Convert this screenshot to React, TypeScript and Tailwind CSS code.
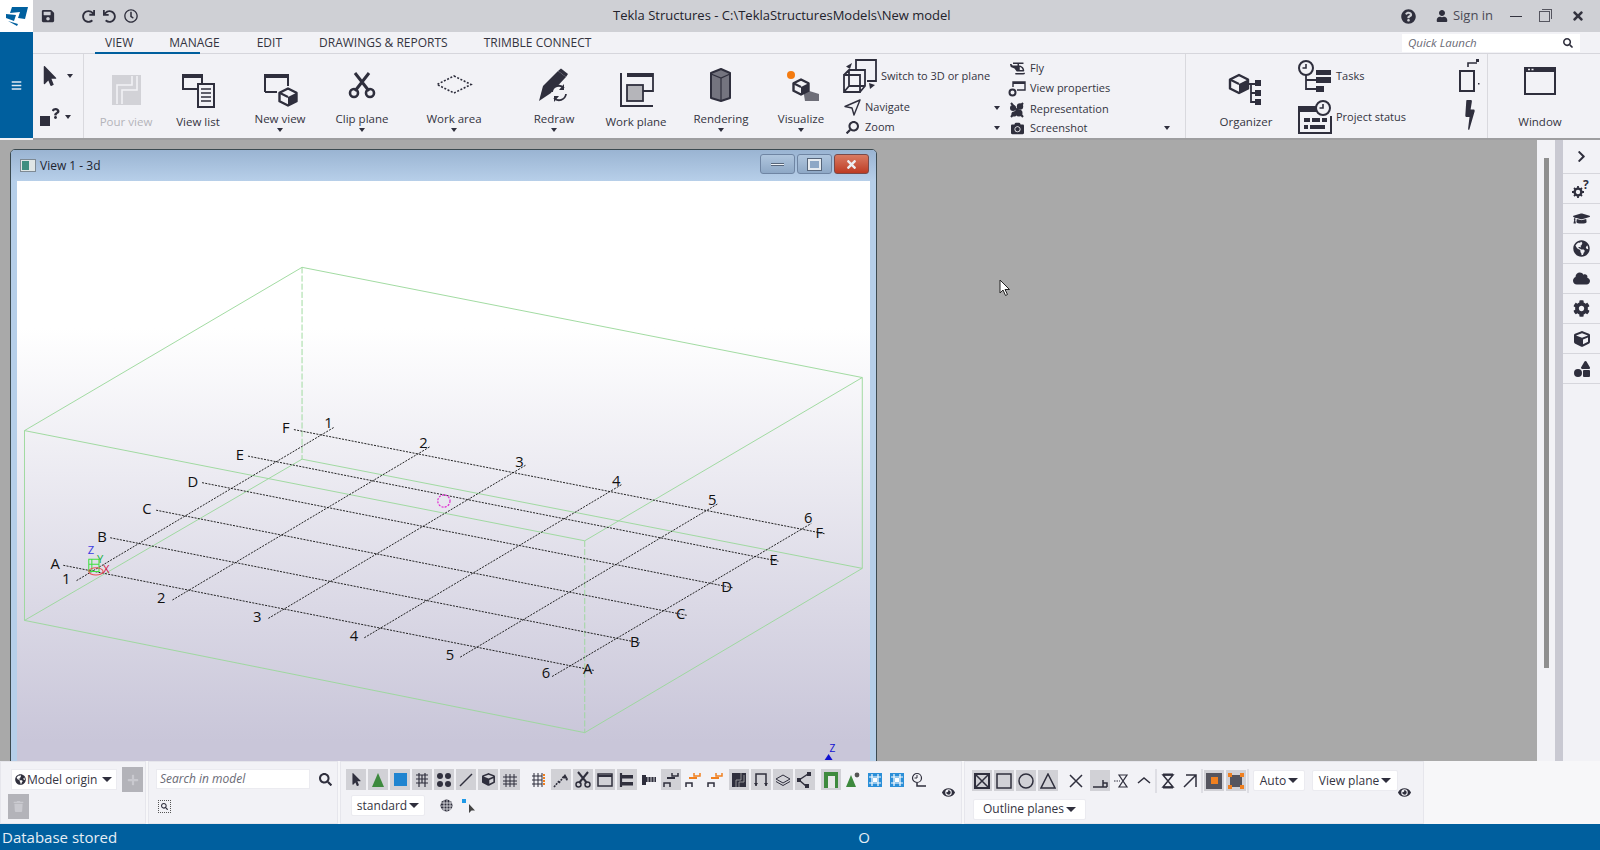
// Tekla Structures main window with a 3D view
import type { ReactNode } from "react"
import {
	FaChevronRight, FaCloud, FaCog, FaCube, FaEye, FaGlobeAmericas, FaGraduationCap, FaHelicopter,
	FaCamera, FaMousePointer, FaPlus, FaQuestion, FaQuestionCircle, FaRedo, FaRegClock, FaSave,
	FaSearch, FaShapes, FaTrash, FaUndo, FaUser, FaBolt, FaBars, FaTimes,
} from "react-icons/fa"

const D = "#2f2f3d"
const FONT = "font-['Open_Sans',sans-serif]"

function Caret({ className = "" }: { className?: string }) {
	return <span className={`inline-block w-0 h-0 border-x-[3.5px] border-x-transparent border-t-[4px] border-t-[#2f2f3d] ${className}`} />
}

/* 40x40 ribbon icons */
function Big({ children }: { children: ReactNode }) {
	return <svg width="40" height="40" viewBox="0 0 40 40" className="shrink-0 overflow-visible">{children}</svg>
}

const Cube = ({ x, y, r, fill = "#f2f2f6" }: { x: number; y: number; r: number; fill?: string }) => (
	<g strokeLinejoin="round">
		<path d={`M${x} ${y - r}L${x + r} ${y - r / 2}V${y + r / 2}L${x} ${y + r}L${x - r} ${y + r / 2}V${y - r / 2}Z`} fill={fill} stroke={D} strokeWidth="2.4" />
		<path d={`M${x} ${y}L${x + r} ${y - r / 2}V${y + r / 2}L${x} ${y + r}Z`} fill={D} />
		<path d={`M${x - r} ${y - r / 2}L${x} ${y}`} stroke={D} strokeWidth="2" />
	</g>
)

const PourIcon = () => (
	<Big>
		<rect x="6" y="7" width="29" height="30" fill="#d2d2d7" />
		<path d="M31 8V22H16V36M26 8V17H11V36" fill="none" stroke="#f2f2f6" strokeWidth="1.6" />
	</Big>
)
const ViewListIcon = () => (
	<Big>
		<rect x="5" y="7" width="19" height="14" fill="none" stroke={D} strokeWidth="2" />
		<rect x="5" y="6" width="19" height="4" fill={D} />
		<rect x="20" y="16" width="16" height="23" fill="#f2f2f6" stroke={D} strokeWidth="2" />
		<path d="M23 21H33M23 25H33M23 29H33M23 33H33" stroke={D} strokeWidth="1.6" />
	</Big>
)
const NewViewIcon = () => (
	<Big>
		<path d="M5 24V7H28V18" fill="none" stroke={D} strokeWidth="2" />
		<path d="M5 24H17" stroke={D} strokeWidth="2" />
		<rect x="4" y="6" width="25" height="4" fill={D} />
		<Cube x={28} y={29} r={8.5} />
	</Big>
)
const ScissorsIcon = () => (
	<Big>
		<path d="M27 5L13 23M13 5L27 23" stroke={D} strokeWidth="3" />
		<circle cx="12" cy="25" r="4" fill="none" stroke={D} strokeWidth="2.6" />
		<circle cx="28" cy="25" r="4" fill="none" stroke={D} strokeWidth="2.6" />
	</Big>
)
const WorkAreaIcon = () => (
	<Big>
		<path d="M20 8L37 16.5L20 25L3 16.5Z" fill="none" stroke={D} strokeWidth="1.6" strokeDasharray="2 1.6" />
	</Big>
)
const RedrawIcon = () => (
	<Big>
		<path d="M5 33L9 18L24 3L32 9L17 25Z" fill={D} />
		<path d="M24 3L27 0.5L34 6L32 9Z" fill={D} />
		<circle cx="25" cy="25" r="7.5" fill="#f2f2f6" />
		<path d="M18 24A7 7 0 0 1 30 20M32 26A7 7 0 0 1 20 30" fill="none" stroke={D} strokeWidth="1.8" />
		<path d="M30 16V22H25ZM20 34V28H25Z" fill={D} />
	</Big>
)
const WorkPlaneIcon = () => (
	<Big>
		<path d="M5 5V38H37" fill="none" stroke={D} strokeWidth="2" />
		<path d="M11 6H37V23H26" fill="none" stroke={D} strokeWidth="1.8" />
		<rect x="11" y="5" width="26" height="4" fill={D} />
		<rect x="11" y="17" width="16" height="16" fill="#b5b5ba" stroke={D} strokeWidth="1.8" />
	</Big>
)
const RenderingIcon = () => (
	<Big>
		<path d="M20 1L29 5V30L20 33L10 30V5Z" fill="#74747f" stroke={D} strokeWidth="2" strokeLinejoin="round" />
		<path d="M10 6L20 10L29 6M20 10V33" fill="none" stroke={D} strokeWidth="1.2" />
	</Big>
)
const VisualizeIcon = () => (
	<Big>
		<path d="M22 21L38 26V33H24Z" fill="#6e6e78" />
		<circle cx="10" cy="7" r="4" fill="#f47b10" />
		<Cube x={20} y={19} r={7.5} fill="#f2f2f6" />
	</Big>
)
const OrganizerIcon = () => (
	<Big>
		<Cube x={13} y={16} r={9} />
		<path d="M23 16H32M25 16V34H32M25 25H32" fill="none" stroke={D} strokeWidth="1.8" />
		<rect x="29" y="12" width="6" height="6" fill={D} />
		<rect x="29" y="22" width="6" height="6" fill={D} />
		<rect x="29" y="31" width="6" height="6" fill={D} />
	</Big>
)
const WindowIcon = () => (
	<Big>
		<rect x="5" y="0" width="30" height="26" fill="none" stroke={D} strokeWidth="2" />
		<rect x="4" y="-1" width="32" height="5" fill={D} />
		<path d="M8 1.5H15" stroke="#f2f2f6" strokeWidth="1.4" strokeDasharray="2 1.5" />
	</Big>
)

/* 34x34 medium icons */
function Mid({ children }: { children: ReactNode }) {
	return <svg width="34" height="34" viewBox="0 0 34 34" className="shrink-0">{children}</svg>
}
const SwitchIcon = () => (
	<Mid>
		<path d="M13 11V1H33V22H24" fill="none" stroke={D} strokeWidth="1.8" />
		<path d="M1 16H17V33H1ZM1 16L6 11H22V27L17 33M6 11V27H22M6 27L1 33" fill="none" stroke={D} strokeWidth="1.8" />
		<path d="M9 4L3 7.5L7 10Z" fill={D} />
		<path d="M27 30L32 26L26 24Z" fill={D} />
	</Mid>
)
const TasksIcon = () => (
	<Mid>
		<circle cx="8" cy="9" r="7" fill="#f2f2f6" stroke={D} strokeWidth="2" />
		<path d="M8 5V9H4.5" fill="none" stroke={D} strokeWidth="1.6" />
		<path d="M8 16V30H20M8 21H20" fill="none" stroke={D} strokeWidth="1.8" />
		<rect x="18" y="11" width="15" height="5" fill={D} />
		<rect x="18" y="18" width="15" height="6" fill={D} />
		<rect x="18" y="27" width="8" height="6" fill={D} />
	</Mid>
)
const StatusIcon = () => (
	<Mid>
		<path d="M22 7H1V33H33V16" fill="none" stroke={D} strokeWidth="2" />
		<rect x="1" y="7" width="20" height="5" fill={D} />
		<path d="M6 18H12V22H6ZM14 18H22V22H14ZM24 18H29V22H24ZM6 25H10V29H6ZM12 25H27V29H12Z" fill={D} />
		<circle cx="25" cy="8" r="7" fill="#f2f2f6" stroke={D} strokeWidth="2" />
		<path d="M25 4V8H21.5" fill="none" stroke={D} strokeWidth="1.6" />
	</Mid>
)
const SmallSetIcon = () => (
	<svg width="21" height="34" viewBox="0 0 21 34" className="shrink-0">
		<rect x="1" y="12" width="14" height="20" fill="none" stroke={D} strokeWidth="2" />
		<path d="M9 8V4H18" fill="none" stroke={D} strokeWidth="1.6" />
		<rect x="17" y="0" width="3" height="3" fill={D} />
		<rect x="19" y="24" width="1.5" height="1.5" fill={D} />
	</svg>
)

function BigBtn({ label, w, icon, drop, dim }: { label: string; w: string; icon: ReactNode; drop?: boolean; dim?: boolean }) {
	return (
		<div className={`${w} shrink-0 flex flex-col items-center pt-[14px]`}>
			{icon}
			<span className={`${drop ? "mt-[1px]" : "mt-[4px]"} h-[20px] leading-[20px] text-[11.5px] whitespace-nowrap ${dim ? "text-[#b4b4ba]" : "text-[#34343f]"}`}>{label}</span>
			{drop && <Caret className="mt-[-1px]" />}
		</div>
	)
}

function SmallRow({ icon, label, h, caret }: { icon: ReactNode; label: string; h: string; caret?: boolean }) {
	return (
		<div className={`${h} flex items-center gap-[4px] text-[11px] text-[#34343f] whitespace-nowrap`}>
			<span className="w-[18px] flex justify-center shrink-0">{icon}</span>
			{label}
			{caret && <Caret className="ml-auto mr-[3px]" />}
		</div>
	)
}

function Ribbon() {
	return (
		<div className={`h-[86px] flex bg-[#f2f2f6] border-b-2 border-[#9e9ea0] ${FONT}`}>
			<div className="w-[51px] shrink-0 border-r border-[#d9d9de] flex flex-col pl-[7px] pt-[11px] gap-[19px]">
				<div className="flex items-center h-[22px] gap-[7px]">
					<FaMousePointer size={20} color={D} />
					<Caret />
				</div>
				<div className="flex items-center h-[22px] relative">
					<span className="w-[10px] h-[10px] bg-[#2f2f3d] mt-[8px]" />
					<FaQuestion size={11} color={D} className="mt-[-8px]" />
					<Caret className="ml-[4px]" />
				</div>
			</div>
			<div className="w-[8px] shrink-0" />
			<BigBtn label="Pour view" w="w-[68px]" icon={<PourIcon />} dim />
			<BigBtn label="View list" w="w-[76px]" icon={<ViewListIcon />} />
			<BigBtn label="New view" w="w-[88px]" icon={<NewViewIcon />} drop />
			<BigBtn label="Clip plane" w="w-[76px]" icon={<ScissorsIcon />} drop />
			<BigBtn label="Work area" w="w-[108px]" icon={<WorkAreaIcon />} drop />
			<BigBtn label="Redraw" w="w-[92px]" icon={<RedrawIcon />} drop />
			<BigBtn label="Work plane" w="w-[72px]" icon={<WorkPlaneIcon />} />
			<BigBtn label="Rendering" w="w-[98px]" icon={<RenderingIcon />} drop />
			<BigBtn label="Visualize" w="w-[62px]" icon={<VisualizeIcon />} drop />

			<div className="w-[160px] ml-[11px] shrink-0 flex flex-col pt-[5px]">
				<div className="h-[34px] flex items-center gap-[4px] text-[11px] text-[#34343f] whitespace-nowrap">
					<SwitchIcon />
					Switch to 3D or plane
				</div>
				<div className="h-[5px]" />
				<SmallRow h="h-[20px]" label="Navigate" caret icon={
					<svg width="17" height="17" viewBox="0 0 17 17"><path d="M16 1L1 7.5L8 9L10 16Z" fill="none" stroke={D} strokeWidth="1.4" strokeLinejoin="round" /></svg>
				} />
				<SmallRow h="h-[21px]" label="Zoom" caret icon={<FaSearch size={13} color={D} className="-scale-x-100" />} />
			</div>
			<div className="w-[165px] ml-[5px] shrink-0 flex flex-col pt-[4px]">
				<SmallRow h="h-[20px]" label="Fly" icon={<FaHelicopter size={15} color={D} />} />
				<SmallRow h="h-[21px]" label="View properties" icon={
					<svg width="18" height="16" viewBox="0 0 18 16"><path d="M5 6V1H17V9H9" fill="none" stroke={D} strokeWidth="1.4" /><rect x="5" y="1" width="12" height="2" fill={D} /><circle cx="4.5" cy="11.5" r="3" fill="none" stroke={D} strokeWidth="2" /></svg>
				} />
				<SmallRow h="h-[21px]" label="Representation" icon={
					<svg width="16" height="16" viewBox="0 0 16 16"><path d="M2 1L14 15M14 1L2 15" stroke={D} strokeWidth="2" /><circle cx="4" cy="6" r="3" fill={D} /><circle cx="11" cy="4.5" r="3.2" fill={D} /><circle cx="10" cy="11" r="3.5" fill={D} /><circle cx="5" cy="12" r="2.6" fill={D} /></svg>
				} />
				<SmallRow h="h-[16px]" label="Screenshot" caret icon={<FaCamera size={13} color={D} />} />
			</div>
			<div className="w-[13px] shrink-0 border-r border-[#d9d9de]" />
			<div className="w-[20px] shrink-0" />
			<BigBtn label="Organizer" w="w-[80px]" icon={<OrganizerIcon />} />
			<div className="w-[150px] ml-[12px] shrink-0 flex flex-col pt-[5px] gap-[7px] text-[11px] text-[#34343f]">
				<div className="flex items-center gap-[4px]"><TasksIcon />Tasks</div>
				<div className="flex items-center gap-[4px]"><StatusIcon />Project status</div>
			</div>
			<div className="w-[21px] ml-[11px] shrink-0 flex flex-col pt-[5px] gap-[7px] items-end">
				<SmallSetIcon />
				<FaBolt size={30} color={D} className="scale-x-50 translate-x-[5px]" />
			</div>
			<div className="w-[8px] shrink-0 border-r border-[#d9d9de]" />
			<BigBtn label="Window" w="w-[104px]" icon={<WindowIcon />} />
		</div>
	)
}

function ViewWindow() {
	const rowsA: [string, number, number][] = [["A", 54, 552], ["B", 100, 525], ["C", 144, 498], ["D", 189, 471], ["E", 235, 445], ["F", 280, 418]]
	const rowsB: [string, number, number][] = [["A", 576, 655], ["B", 622, 628], ["C", 667, 601], ["D", 712, 574], ["E", 758, 548], ["F", 803, 521]]
	const colsA: [string, number, number][] = [["1", 65, 566], ["2", 158, 585], ["3", 252, 604], ["4", 347, 622], ["5", 441, 641], ["6", 535, 659]]
	const colsB: [string, number, number][] = [["1", 322, 414], ["2", 415, 433], ["3", 509, 452], ["4", 604, 470], ["5", 698, 489], ["6", 792, 507]]
	return (
		<div className="ml-[10px] mt-[9px] w-[867px] h-[700px] rounded-t-[5px] border border-[#3c4a50] bg-[#b6cfe9] shrink-0 flex flex-col">
			<div className={`h-[31px] shrink-0 rounded-t-[4px] bg-linear-to-b from-[#9ab4d2] to-[#b7cfe9] flex items-center pl-[9px] pr-[7px] ${FONT}`}>
				<svg width="16" height="13" viewBox="0 0 16 13" className="shrink-0">
					<rect x="0.5" y="0.5" width="15" height="12" fill="#dfe6e6" stroke="#7e8a94" />
					<rect x="2" y="2" width="7" height="9" fill="#3f8f80" />
				</svg>
				<span className="ml-[4px] text-[12px] text-[#1d2430]">View 1 - 3d</span>
				<div className="ml-auto flex gap-[2px] mt-[-3px]">
					<div className="w-[35px] h-[20px] rounded-[3px] border border-[#6f85a3] bg-linear-to-b from-[#b0c6de] to-[#8ea8c6] flex items-center justify-center">
						<span className="w-[13px] h-[3px] bg-[#eef2f6] border-y border-[#56657a]" />
					</div>
					<div className="w-[35px] h-[20px] rounded-[3px] border border-[#6f85a3] bg-linear-to-b from-[#b0c6de] to-[#8ea8c6] flex items-center justify-center">
						<span className="w-[13px] h-[11px] border-2 border-[#e6ebf0] outline outline-[#56657a] bg-[#8ea8c6]" />
					</div>
					<div className="w-[35px] h-[20px] rounded-[3px] border border-[#7a4a4a] bg-linear-to-b from-[#d97a62] to-[#bd3a22] flex items-center justify-center">
						<FaTimes size={13} color="#eceff2" />
					</div>
				</div>
			</div>
			<div className="mx-[6px] flex-1 bg-linear-to-b from-white from-[22%] to-[#c9c6d9] to-[84%] overflow-hidden">
				<svg width="853" height="579" viewBox="16.66 177.4 835.9 567.4" className={`block ${FONT}`}>
					{/* work area box */}
					<g fill="none" stroke="#9ad89a" strokeWidth="0.9">
						<path d="M296 262L845 370L573 530L24 422ZM24 422V608L573 718L845 557V370M296 450L24 608M296 450L845 557" />
						<path d="M296 262V450M573 530V718" strokeDasharray="6 2" />
					</g>
					{/* grid */}
					<g stroke="#111" strokeWidth="0.9" strokeDasharray="2 1.2">
						<path d="M62 554L582 657M108 527L627 630M153 500L673 603M198 473L718 576M243 447L763 550M288 421L808 523" />
						<path d="M75 569L327 419M169 588L421 438M263 606L515 456M357 625L609 475M451 644L703 494M541 663L795 513" />
					</g>
					<g fontSize="14.5" fill="#111" textAnchor="middle" dominantBaseline="central">
						{[...rowsA, ...rowsB, ...colsA, ...colsB].map(([t, x, y], i) => (
							<text key={i} x={x} y={y}>{t}</text>
						))}
					</g>
					<circle cx="435" cy="491" r="6" fill="none" stroke="#e020d0" strokeWidth="1.1" strokeDasharray="2 1.2" />
					{/* origin symbol */}
					<g fontSize="11">
						<path d="M87 548H97V560H87ZM90 548V560M87 553H97" fill="none" stroke="#3ee03e" strokeWidth="1" />
						<ellipse cx="94" cy="560" rx="7" ry="3.5" fill="none" stroke="#e85050" strokeWidth="1" />
						<text x="86" y="543" fill="#3a3ae0">Z</text>
						<text x="95" y="552" fill="#20b040">Y</text>
						<text x="101" y="562" fill="#d01040">X</text>
					</g>
					<path d="M812 739L816 745H808Z" fill="#1010d0" />
					<text x="813" y="737" fontSize="10" fill="#1010d0">Z</text>
				</svg>
			</div>
		</div>
	)
}

function Cell({ bg, w = "w-[20px]", ml = "ml-[2px]", children }: { bg?: boolean; w?: string; ml?: string; children: ReactNode }) {
	return <div className={`${w} ${ml} h-[21px] shrink-0 flex items-center justify-center ${bg ? "bg-[#d1d1d6]" : ""}`}>{children}</div>
}

/* 16x16 toolbar glyphs */
function G({ children }: { children: ReactNode }) {
	return <svg width="16" height="16" viewBox="0 0 16 16">{children}</svg>
}
const l = { fill: "none", stroke: D, strokeWidth: 1.5 } as const
const gridG = <path d="M1 5H15M1 9H15M1 12H15M4 2V15M8 2V15M12 2V15" {...l} strokeWidth={1} />
const splitG = (c: string, c2: string) => (
	<G>
		<path d="M9 1V4H15V1" fill="none" stroke={c} strokeWidth="1.5" />
		<path d="M4 6H12" stroke={c} strokeWidth="2" />
		<path d="M1 15V11H7V15" fill="none" stroke={c2} strokeWidth="1.5" />
	</G>
)
const blueG = (
	<G>
		<rect x="1" y="1" width="14" height="14" fill="#2b8fd8" />
		<path d="M5 2V14M11 2V14M2 5H14M2 11H14" stroke="#fff" strokeWidth="1.2" />
		<rect x="6" y="6" width="4" height="4" fill="#fff" />
	</G>
)

function Select({ label, w, ml = "" }: { label: string; w: string; ml?: string }) {
	return (
		<div className={`${w} ${ml} h-[21px] shrink-0 bg-white border border-[#ebebf0] rounded-[2px] flex items-center justify-center gap-[2px] text-[12px] text-[#34343f] whitespace-nowrap`}>
			{label}
			<span className="inline-block w-0 h-0 border-x-[5px] border-x-transparent border-t-[5px] border-t-[#2f2f3d]" />
		</div>
	)
}

const Div = () => <div className="w-[2px] h-[24px] mx-[1px] bg-[#dedee4] shrink-0" />

function BottomBar() {
	const panel = "h-full bg-[#f2f2f6] border border-[#e6e6ec] shrink-0"
	return (
		<div className={`h-[63px] shrink-0 flex items-stretch gap-[2px] bg-[#f7f7f9] ${FONT}`}>
			{/* origin */}
			<div className={`${panel} w-[146px] pt-[5px]`}>
				<div className="flex items-center h-[25px] pl-[10px]">
					<div className="w-[106px] h-[21px] bg-white border border-[#ebebf0] flex items-center gap-[1px] pl-[3px] text-[12px] text-[#34343f] whitespace-nowrap">
						<FaGlobeAmericas size={11} color={D} />
						Model origin
						<span className="ml-[4px] inline-block w-0 h-0 border-x-[5px] border-x-transparent border-t-[5px] border-t-[#2f2f3d]" />
					</div>
					<div className="ml-[5px] w-[21px] h-[25px] bg-[#b3b3b9] flex items-center justify-center"><FaPlus size={12} color="#c9c9cf" /></div>
				</div>
				<div className="mt-[2px] ml-[7px] w-[21px] h-[25px] bg-[#b3b3b9] flex items-center justify-center"><FaTrash size={11} color="#c9c9cf" /></div>
			</div>
			{/* search */}
			<div className={`${panel} w-[190px] pt-[7px] pl-[7px]`}>
				<div className="flex items-center">
					<div className="w-[154px] h-[20px] bg-white border border-[#ebebf0] flex items-center pl-[3px] italic text-[12px] text-[#6a6a75]">Search in model</div>
					<FaSearch size={13} color={D} className="ml-[9px]" />
				</div>
				<div className="mt-[11px] ml-[2px] w-[13px] h-[13px] border border-dotted border-[#555] flex items-center justify-center">
					<FaSearch size={7} color={D} />
				</div>
			</div>
			{/* selection switches */}
			<div className={`${panel} w-[622px] flex items-center pr-[4px]`}>
				<div className="flex-1">
					<div className="flex pl-[3px]">
						<Cell bg><FaMousePointer size={13} color={D} /></Cell>
						<Cell bg><svg width="14" height="16" viewBox="0 0 14 16"><path d="M7 1L13 15H1Z" fill="#3e8a3e" /></svg></Cell>
						<Cell bg><span className="w-[13px] h-[13px] bg-[#1f84d0]" /></Cell>
						<Cell bg><G><path d="M2 3H14M2 7H14M2 11H14M5 1V15M11 1V15M8 3V11" {...l} strokeWidth={1.2} /></G></Cell>
						<Cell bg><G><circle cx="4" cy="4" r="3" fill={D} /><circle cx="12" cy="4" r="3" fill={D} /><circle cx="4" cy="12" r="3" fill={D} /><circle cx="12" cy="12" r="3" fill={D} /></G></Cell>
						<Cell bg><G><path d="M2 14L14 2" {...l} /></G></Cell>
						<Cell bg><FaCube size={13} color={D} /></Cell>
						<Cell bg><G>{gridG}</G></Cell>
						<Cell ml="ml-[9px]"><G><path d="M1 4H11M1 8H11M1 12H11M3 1V15M7 1V15M11 1V15" fill="none" stroke={D} strokeWidth="1" /><path d="M13 2V14" stroke="#f08020" strokeWidth="2" strokeDasharray="2 1" /></G></Cell>
						<Cell bg><G><path d="M1 15L6 9M6 11L11 4L15 9" fill="none" stroke={D} strokeWidth="1.6" strokeDasharray="2 1" /><path d="M9 6L12 2L15 7Z" fill={D} /></G></Cell>
						<Cell bg><svg width="16" height="17" viewBox="0 0 16 17"><path d="M13 1L4 12M3 1L12 12" {...l} strokeWidth={2} /><circle cx="3.5" cy="13.5" r="2.5" {...l} /><circle cx="12.5" cy="13.5" r="2.5" {...l} /></svg></Cell>
						<Cell bg><G><rect x="1" y="2" width="14" height="12" {...l} /><path d="M1 4H15" stroke={D} strokeWidth="2" /></G></Cell>
						<Cell bg><G><path d="M2 1V15" stroke={D} strokeWidth="2.2" /><rect x="2" y="3" width="12" height="3.5" fill={D} /><rect x="2" y="10" width="12" height="3.5" fill={D} /></G></Cell>
						<Cell><G><rect x="1" y="3" width="4" height="10" fill={D} /><rect x="5" y="5" width="10" height="5" fill={D} /><path d="M7 5V10M10 5V10M13 5V10" stroke="#f2f2f6" strokeWidth="0.8" /></G></Cell>
						<Cell bg>{splitG(D, D)}</Cell>
						<Cell>{splitG("#f08020", D)}</Cell>
						<Cell>{splitG("#f08020", D)}</Cell>
						<Cell ml="ml-[4px]" bg><G><rect x="1" y="1" width="14" height="14" fill={D} /><path d="M10 1V8H5V15M13 3V10H8V15" fill="none" stroke="#aaa" strokeWidth="0.8" /></G></Cell>
						<Cell bg><G><path d="M3 14V2H13V14" {...l} /><path d="M1 11L3 14L5 11ZM11 11L13 14L15 11Z" fill={D} /></G></Cell>
						<Cell bg><G><path d="M8 3L15 7L8 11L1 7Z" {...l} strokeWidth={1} /><path d="M1 9.5L8 13.5L15 9.5" {...l} strokeWidth={1} /></G></Cell>
						<Cell bg><G><path d="M2 8L11 2M2 8L9 14" {...l} /><rect x="0" y="6" width="4" height="4" fill={D} /><rect x="10" y="0" width="4" height="4" fill={D} /><rect x="8" y="12" width="4" height="4" fill={D} /></G></Cell>
						<Cell ml="ml-[6px]" bg><span className="w-[14px] h-[16px] bg-[#3e8a3e] flex items-end justify-center"><span className="w-[7px] h-[12px] bg-[#e8e8ea]" /></span></Cell>
						<Cell><G><path d="M6 3L11 15H1Z" fill="#3e8a3e" /><circle cx="12" cy="3" r="2.4" fill="#555" /></G></Cell>
						<Cell>{blueG}</Cell>
						<Cell>{blueG}</Cell>
						<Cell><G><circle cx="6" cy="6" r="4.5" {...l} strokeWidth={1.2} /><path d="M6 3V6H3.5" {...l} strokeWidth={1} /><path d="M6 11V14H15" {...l} /></G></Cell>
					</div>
					<div className="flex items-center mt-[5px] pl-[10px]">
						<Select label="standard" w="w-[74px]" />
						<svg width="13" height="13" viewBox="0 0 13 13" className="ml-[15px]"><circle cx="6.5" cy="6.5" r="6" fill={D} /><path d="M1 4H12M1 7H12M1 10H12M4 1V12M7 1V12M10 1V12" stroke="#f2f2f6" strokeWidth="0.8" /></svg>
						<svg width="15" height="16" viewBox="0 0 15 16" className="ml-[9px]"><rect x="0" y="1" width="4" height="4" fill="#1f9ae8" /><path d="M7 6L7 15L9.5 12.5L13 12.5Z" fill="#444" /></svg>
					</div>
				</div>
				<FaEye size={13} color={D} className="shrink-0 mr-[2px]" />
			</div>
			{/* snap switches */}
			<div className={`${panel} w-[460px] flex items-center pr-[4px]`}>
				<div className="flex-1 pl-[5px] pt-[3px]">
					<div className="flex items-center">
						<Cell bg><G><rect x="1" y="1" width="14" height="14" {...l} strokeWidth={2} /><path d="M2 2L14 14M14 2L2 14" {...l} /></G></Cell>
						<Cell bg><G><rect x="1" y="1" width="14" height="14" {...l} /></G></Cell>
						<Cell bg><G><circle cx="8" cy="8" r="7" {...l} /></G></Cell>
						<Cell bg><G><path d="M8 1L15 15H1Z" {...l} /></G></Cell>
						<Cell ml="ml-[8px]"><G><path d="M2 2L14 14M14 2L2 14" {...l} /></G></Cell>
						<Cell ml="ml-[4px]" bg><G><path d="M1 14H15M11 14V7M11 10H15V14" {...l} /></G></Cell>
						<Cell><G><path d="M5 2H13L5 14H13Z" {...l} strokeWidth={1.2} /><path d="M0 8H6" stroke={D} strokeDasharray="1.5 1" /></G></Cell>
						<Cell><G><path d="M2 10L8 5L14 10" {...l} /></G></Cell>
						<Div />
						<Cell ml="ml-0"><G><path d="M3 2H13L3 14H13Z" {...l} /><path d="M3 1.5H13M3 14.5H13" stroke={D} strokeWidth="2" /></G></Cell>
						<Cell><G><path d="M2 14L14 2M4 2H14V14" {...l} /></G></Cell>
						<Div />
						<Cell ml="ml-0" bg><span className="w-[16px] h-[16px] bg-[#55555f] flex items-center justify-center"><span className="w-[7px] h-[7px] bg-[#f08020]" /></span></Cell>
						<Cell bg><G><rect x="2" y="2" width="12" height="12" fill="#55555f" /><path d="M0 0H4V4H0ZM12 0H16V4H12ZM0 12H4V16H0ZM12 12H16V16H12Z" fill="#f08020" /></G></Cell>
						<Div />
						<Select label="Auto" w="w-[52px]" ml="ml-[3px]" />
						<Select label="View plane" w="w-[86px]" ml="ml-[7px]" />
					</div>
					<div className="mt-[6px] pl-[3px]"><Select label="Outline planes" w="w-[113px]" /></div>
				</div>
				<FaEye size={13} color={D} className="shrink-0 mr-[16px]" />
			</div>
		</div>
	)
}

export default function App() {
	const side = [
		<svg width="20" height="18" viewBox="0 0 20 18" key="g"><circle cx="6" cy="12" r="3.4" fill="none" stroke={D} strokeWidth="2.4" /><path d="M6 6V8M6 16V18M0 12H2M10 12H12M2 8L3.4 9.4M8.6 14.6L10 16M10 8L8.6 9.4M2 16L3.4 14.6" stroke={D} strokeWidth="1.8" /><text x="11" y="9" fontSize="12" fontWeight="700" fill={D}>?</text></svg>,
		<FaGraduationCap size={17} color={D} key="h" />,
		<FaGlobeAmericas size={17} color={D} key="w" />,
		<FaCloud size={17} color={D} key="c" />,
		<FaCog size={17} color={D} key="s" />,
		<FaCube size={16} color={D} key="b" />,
		<FaShapes size={16} color={D} key="p" />,
	]
	return (
		<div className={`w-full h-[850px] flex flex-col overflow-hidden bg-[#f2f2f6] ${FONT}`}>
			{/* title bar */}
			<div className="h-[32px] shrink-0 flex items-center bg-[#cfd0d5]">
				<div className="w-[33px] h-full bg-white flex items-center justify-center shrink-0">
					<svg width="24" height="20" viewBox="0 0 24 20"><path d="M7 1L23 1L20 13L13 12L15 6L5 7ZM1 8L11 9L9 15L1 12ZM3 15L13 18L12 20Z" fill="#00609f" /></svg>
				</div>
				<FaSave size={14} color={D} className="ml-[8px]" />
				<FaUndo size={13} color={D} className="ml-[27px] -scale-x-100 rotate-0" />
				<FaRedo size={13} color={D} className="ml-[8px] -scale-x-100" />
				<FaRegClock size={14} color={D} className="ml-[8px]" />
				<span className="ml-[475px] text-[13px] text-[#22222c] whitespace-nowrap">Tekla Structures - C:\TeklaStructuresModels\New model</span>
				<div className="ml-auto flex items-center">
					<FaQuestionCircle size={15} color={D} />
					<FaUser size={12} color={D} className="ml-[20px]" />
					<span className="ml-[5px] text-[13px] text-[#4a4a55]">Sign in</span>
					<span className="ml-[17px] w-[12px] h-[1px] bg-[#33333f]" />
					<span className="ml-[17px] w-[11px] h-[11px] border border-[#55555f] relative">
						<span className="absolute left-[2px] top-[-3px] w-[10px] h-[10px] border-t border-r border-[#55555f]" />
					</span>
					<FaTimes size={14} color="#33333f" strokeWidth={0} className="ml-[21px] mr-[15px]" />
				</div>
			</div>

			{/* tabs + ribbon */}
			<div className="flex shrink-0">
				<div className="w-[33px] bg-[#005f9e] flex items-center justify-center shrink-0 h-[106px]">
					<FaBars size={11} color="#dfe9f2" />
				</div>
				<div className="flex-1 min-w-0">
					<div className="h-[22px] flex items-center bg-[#f2f2f6] border-b border-[#d6d6dc] text-[12px] text-[#34343f] relative">
						<span className="absolute left-[62px] bottom-[-1px] w-[105px] h-[2px] bg-[#005f9e]" />
						<span className="ml-[72px]">VIEW</span>
						<span className="ml-[36px]">MANAGE</span>
						<span className="ml-[37px]">EDIT</span>
						<span className="ml-[37px]">DRAWINGS &amp; REPORTS</span>
						<span className="ml-[36px]">TRIMBLE CONNECT</span>
						<div className="ml-auto mr-[20px] w-[178px] h-[18px] bg-white flex items-center pl-[6px] pr-[7px] italic text-[#6a6a75] text-[11.5px]">
							Quick Launch
							<FaSearch size={10} color={D} className="ml-auto" />
						</div>
					</div>
					<Ribbon />
				</div>
			</div>

			{/* work area */}
			<div className="flex-1 min-h-0 flex relative">
				<div className="flex-1 min-w-0 bg-[#a9a9a9] overflow-hidden">
					<ViewWindow />
				</div>
				<div className="w-[18px] shrink-0 bg-[#f2f2f6] pt-[18px] flex justify-center">
					<div className="w-[5px] h-[510px] bg-[#8f8f8f]" />
				</div>
				<div className="w-[8px] shrink-0 bg-[#c9c9d2]" />
				<div className="w-[37px] shrink-0 bg-[#f2f2f6] flex flex-col">
					<div className="h-[34px] flex items-center justify-center border-b border-[#d6d6dc]">
						<FaChevronRight size={13} color={D} />
					</div>
					{side.map((icon, i) => (
						<div key={i} className="h-[30px] flex items-center justify-center border-b border-[#d6d6dc]">{icon}</div>
					))}
				</div>
				{/* mouse pointer */}
				<svg width="12" height="18" viewBox="0 0 12 18" className="absolute left-[999px] top-[139px]">
					<path d="M1 1V14L4 11L6.5 16.5L8.5 15.5L6 10.5H10.5Z" fill="#fff" stroke="#222" strokeWidth="1" />
				</svg>
			</div>

			<BottomBar />

			{/* status bar */}
			<div className="h-[26px] shrink-0 bg-[#005f9e] text-[#e6eef5] text-[15px] leading-[26px] flex">
				<span className="pl-[2px]">Database stored</span>
				<span className="ml-[741px]">O</span>
			</div>
		</div>
	)
}
